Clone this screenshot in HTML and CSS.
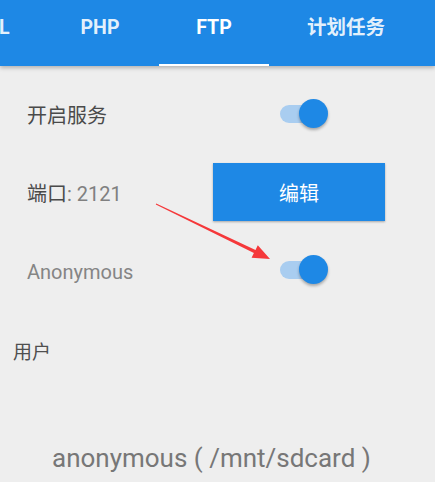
FILE: index.html
```html
<!DOCTYPE html>
<html>
<head>
<meta charset="utf-8">
<link rel="stylesheet" href="styles.css">
</head>
<body>
<div class="page">
  <header class="tabs">
    <div class="tab tab-cut">L</div>
    <div class="tab tab-php">PHP</div>
    <div class="tab tab-ftp active">FTP</div>
    <div class="tab tab-cron">计划任务</div>
  </header>
  <main class="content">
    <div class="row">
      <div class="label strong">开启服务</div>
      <div class="switch"><span class="track"></span><span class="thumb"></span></div>
    </div>
    <div class="row">
      <div class="label"><span class="strong">端口</span><span class="light">: 2121</span></div>
      <button class="btn">编辑</button>
    </div>
    <div class="row">
      <div class="label light anon">Anonymous</div>
      <div class="switch"><span class="track"></span><span class="thumb"></span></div>
    </div>
    <div class="section-title">用户</div>
    <div class="user-item">anonymous ( /mnt/sdcard )</div>
  </main>
  <svg class="arrow" width="435" height="482" viewBox="0 0 435 482">
    <polygon points="156.2,203.5 255.5,249.9 257.8,245.3 270,259 251.6,257.8 253.9,253.1 155.8,204.5" fill="#f5383a"/>
  </svg>
</div>
</body>
</html>
```
FILE: styles.css
```css
* { box-sizing: border-box; }
html, body {
  margin: 0;
  padding: 0;
  background: #eeeeee;
}
body {
  font-family: Roboto, "Noto Sans CJK SC", sans-serif;
  width: 435px;
  height: 482px;
  overflow: hidden;
}
.page {
  position: relative;
  width: 435px;
  height: 482px;
}
.tabs {
  display: flex;
  height: 66px;
  background: #1e88e5;
  box-shadow: 0 2px 4px rgba(0, 0, 0, 0.25);
  position: relative;
  z-index: 1;
}
.tab {
  height: 66px;
  line-height: 55px;
  text-align: center;
  color: rgba(255, 255, 255, 0.9);
  font-size: 19.5px;
  font-weight: 700;
  flex: none;
}
.tab-cut { width: 42px; text-align: left; margin-left: -1px; }
.tab-php { width: 118px; }
.tab-ftp { width: 110px; }
.tab-cron { width: 154px; font-size: 19.5px; }
.tab.active {
  color: #ffffff;
  border-bottom: 2px solid #ffffff;
}
.content {
  padding-top: 19px;
}
.row {
  display: grid;
  grid-template-columns: 213px 172px;
  align-items: center;
  height: 58px;
  margin-bottom: 20px;
}
.label {
  padding-left: 27px;
  font-size: 20px;
  color: #555555;
}
.strong {
  font-weight: 400;
  color: #4a4a4a;
}
.light {
  color: #808080;
  font-weight: 400;
}
.anon {
  padding-top: 3px;
  color: #858585;
}
.switch {
  position: relative;
  width: 50px;
  height: 30px;
  margin-left: 67px;
}
.track {
  position: absolute;
  left: 0;
  top: 6px;
  width: 38px;
  height: 18px;
  border-radius: 9px;
  background: #a9cdf0;
}
.thumb {
  position: absolute;
  left: 19px;
  top: 0;
  width: 29px;
  height: 29px;
  border-radius: 50%;
  background: #1e88e5;
  box-shadow: 0 2px 3px rgba(0, 0, 0, 0.3);
}
.btn {
  width: 172px;
  height: 58px;
  border: none;
  margin: 0;
  padding: 0;
  background: #1e88e5;
  color: #ffffff;
  font-family: Roboto, "Noto Sans CJK SC", sans-serif;
  font-size: 20px;
  box-shadow: 0 1px 2px rgba(0, 0, 0, 0.3);
}
.section-title {
  margin-top: 42px;
  padding-left: 13px;
  font-size: 19px;
  line-height: 24px;
  color: #4f4f4f;
}
.user-item {
  margin-top: 78px;
  padding-left: 52px;
  font-size: 26px;
  line-height: 30px;
  color: #777777;
}
.arrow {
  position: absolute;
  left: 0;
  top: 0;
  pointer-events: none;
  z-index: 2;
}
```
